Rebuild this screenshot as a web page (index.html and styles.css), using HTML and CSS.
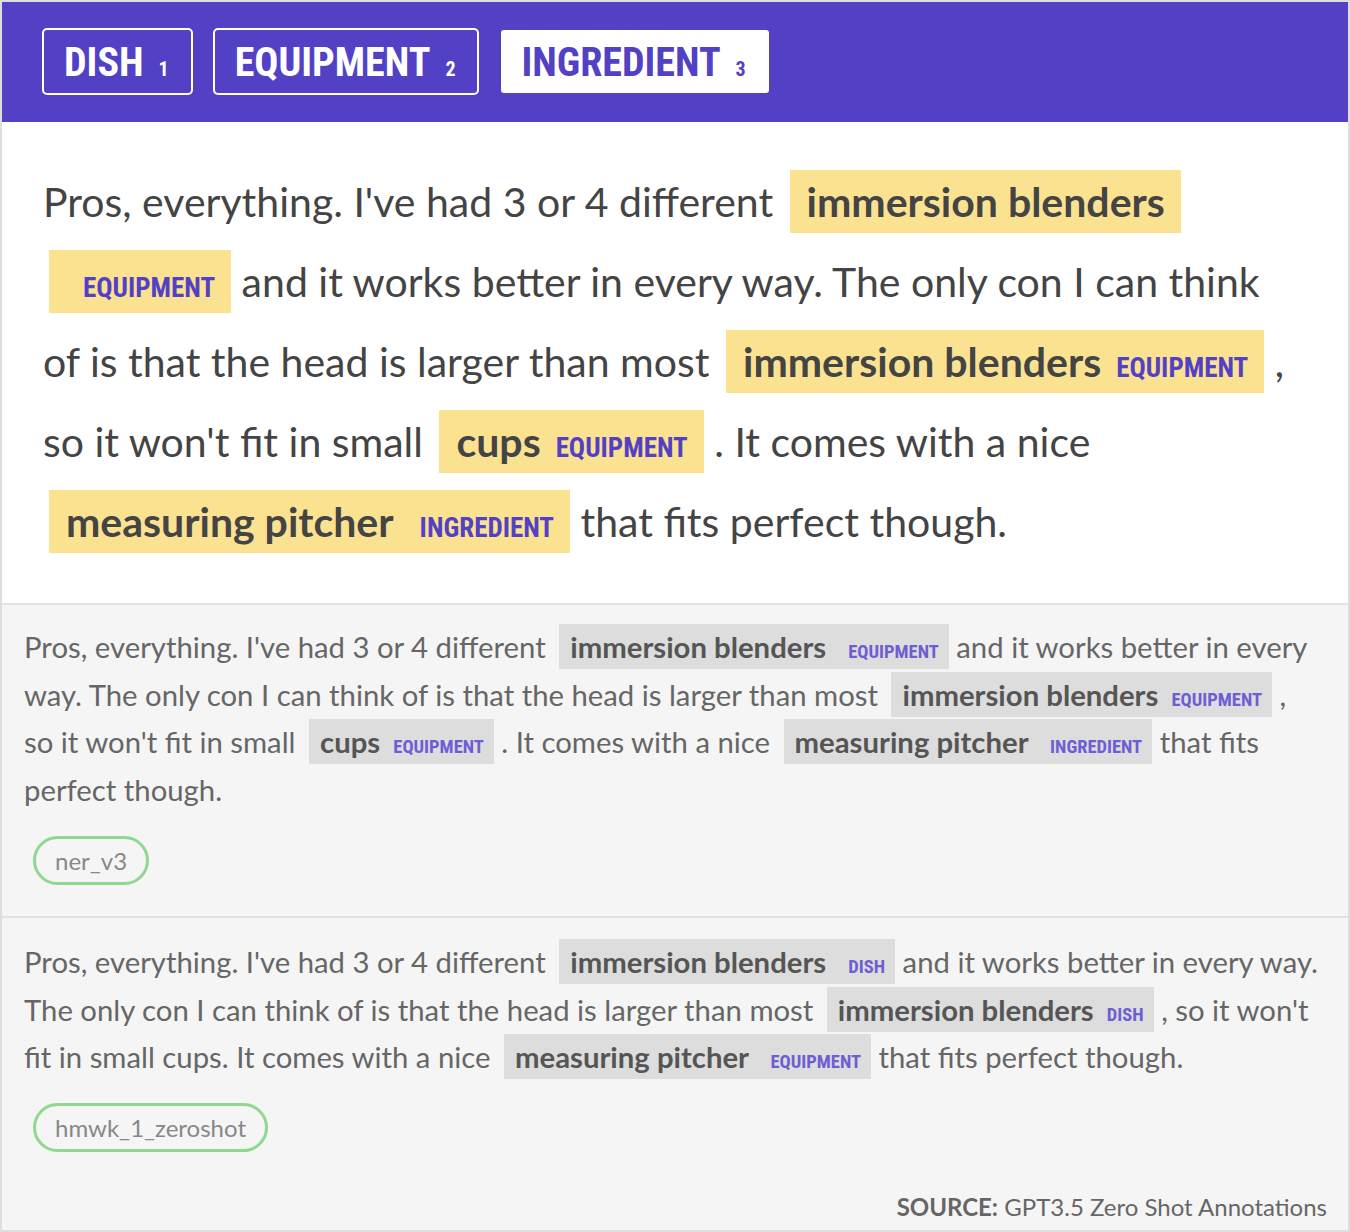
FILE: index.html
```html
<!DOCTYPE html>
<html lang="en">
<head>
<meta charset="utf-8">
<title>NER annotations</title>
<link rel="stylesheet" href="styles.css">
</head>
<body>
<div class="page">
  <header class="bar">
    <div class="btn">DISH<span class="key">1</span></div>
    <div class="btn">EQUIPMENT<span class="key">2</span></div>
    <div class="btn btn-active">INGREDIENT<span class="key">3</span></div>
  </header>

  <section class="main">
    <p class="text">Pros, everything. I've had 3 or 4 different <mark class="hl">immersion blenders <span class="lbl lbl-wide">EQUIPMENT</span></mark> and it works better in every way. The only con I can think of is that the head is larger than most <mark class="hl">immersion blenders <span class="lbl">EQUIPMENT</span></mark> , so it won't fit in small <mark class="hl">cups <span class="lbl">EQUIPMENT</span></mark> . It comes with a nice <mark class="hl">measuring pitcher <span class="lbl lbl-wide">INGREDIENT</span></mark> that fits perfect though.</p>
  </section>

  <section class="card">
    <p class="ctext">Pros, everything. I've had 3 or 4 different <mark class="chl">immersion blenders <span class="clbl clbl-wide">EQUIPMENT</span></mark> and it works better in every way. The only con I can think of is that the head is larger than most <mark class="chl">immersion blenders <span class="clbl">EQUIPMENT</span></mark> , so it won't fit in small <mark class="chl">cups <span class="clbl">EQUIPMENT</span></mark> . It comes with a nice <mark class="chl">measuring pitcher <span class="clbl clbl-wide">INGREDIENT</span></mark> that fits perfect though.</p>
    <div class="pill">ner_v3</div>
  </section>

  <section class="card card-last">
    <p class="ctext">Pros, everything. I've had 3 or 4 different <mark class="chl">immersion blenders <span class="clbl clbl-wide">DISH</span></mark> and it works better in every way. The only con I can think of is that the head is larger than most <mark class="chl">immersion blenders <span class="clbl">DISH</span></mark> , so it won't fit in small cups. It comes with a nice <mark class="chl">measuring pitcher <span class="clbl clbl-wide">EQUIPMENT</span></mark> that fits perfect though.</p>
    <div class="pill">hmwk_1_zeroshot</div>
    <div class="source"><b>SOURCE:</b> GPT3.5 Zero Shot Annotations</div>
  </section>
</div>
</body>
</html>
```

FILE: styles.css
```css
html, body {
  margin: 0;
  padding: 0;
  background: #fff;
}

.page {
  width: 1350px;
  height: 1232px;
  box-sizing: border-box;
  border: 2px solid #dedede;
  font-family: Lato, "Noto Sans", sans-serif;
  display: flex;
  flex-direction: column;
  overflow: hidden;
}

.bar {
  height: 120px;
  flex: none;
  box-sizing: border-box;
  background: #5341c5;
  display: flex;
  align-items: flex-start;
  gap: 20px;
  padding: 26px 40px 0;
}

.btn {
  height: 67px;
  box-sizing: border-box;
  border: 2px solid #fff;
  border-radius: 5px;
  padding: 0 22px 0 20px;
  color: #fff;
  font-family: "Roboto Condensed", "Liberation Sans Narrow", "DejaVu Sans Condensed", "DejaVu Sans", sans-serif;
  font-stretch: condensed;
  font-weight: 700;
  font-size: 40px;
  line-height: 65px;
  white-space: nowrap;
}

.btn-active {
  background: #fff;
  color: #5341c5;
  border-color: #5341c5;
  padding-right: 23px;
}

.key {
  font-size: 20px;
  margin-left: 15px;
}

.main {
  background: #fff;
  padding: 40px 50px 41px 41px;
  border-bottom: 2px solid #e2e2e2;
  flex: none;
}

.text {
  margin: 0;
  font-size: 41px;
  line-height: 80px;
  color: #444;
}

.hl {
  background: #fbe291;
  color: #444;
  font-weight: 700;
  padding: 7px 16px 7px 17px;
  margin: 0 0 0 6px;
  -webkit-box-decoration-break: clone;
  box-decoration-break: clone;
}

.lbl {
  font-family: "Roboto Condensed", "Liberation Sans Narrow", "DejaVu Sans Condensed", "DejaVu Sans", sans-serif;
  font-stretch: condensed;
  font-weight: 700;
  font-size: 27px;
  line-height: 1;
  color: #5341c5;
  margin-left: 5px;
}

.lbl-wide {
  margin-left: 17px;
}

.card {
  background: #f5f5f5;
  padding: 18px 28px 31px 22px;
  flex: none;
}

.card-last {
  border-top: 2px solid #e2e2e2;
  padding-top: 20px;
  padding-bottom: 0;
  flex: 1;
  display: flex;
  flex-direction: column;
  align-items: flex-start;
}

.ctext {
  margin: 0;
  font-size: 29.3px;
  line-height: 47.7px;
  color: #666;
}

.chl {
  background: #dddddd;
  color: #555;
  font-weight: 700;
  padding: 5px 10px 5px 11px;
  margin: 0 0 0 6px;
  -webkit-box-decoration-break: clone;
  box-decoration-break: clone;
}

.clbl {
  font-family: "Roboto Condensed", "Liberation Sans Narrow", "DejaVu Sans Condensed", "DejaVu Sans", sans-serif;
  font-stretch: condensed;
  font-weight: 700;
  font-size: 18.5px;
  line-height: 1;
  color: #6e5ed4;
  margin-left: 6px;
}

.clbl-wide {
  margin-left: 15px;
}

.pill {
  display: inline-block;
  margin: 22px 0 0 9px;
  border: 3px solid #8fd88f;
  border-radius: 26px;
  padding: 0 19px;
  height: 49px;
  box-sizing: border-box;
  line-height: 43px;
  font-size: 24px;
  color: #888;
}

.source {
  align-self: flex-end;
  margin-top: auto;
  margin-bottom: 9px;
  margin-right: -7px;
  font-size: 24px;
  line-height: 28px;
  color: #666;
}

.source b {
  font-weight: 700;
}
```
